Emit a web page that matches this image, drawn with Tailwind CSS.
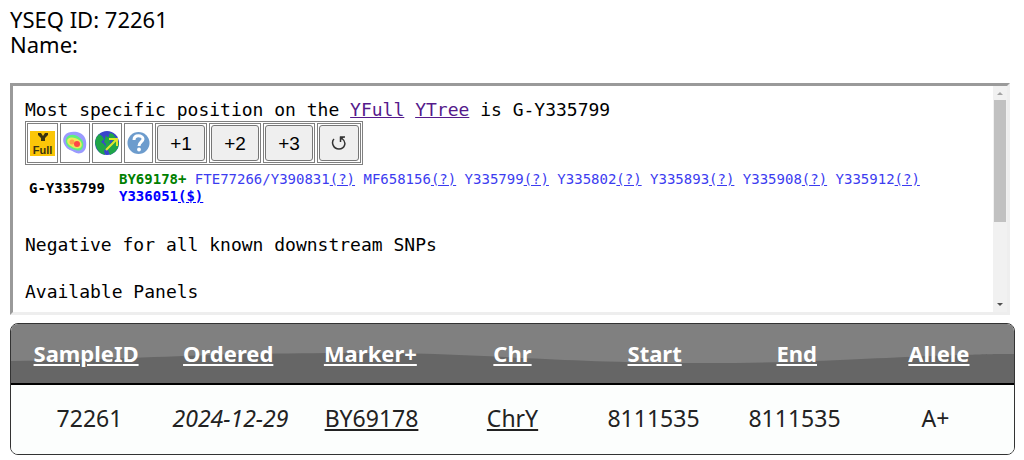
<!DOCTYPE html>
<html lang="en">
  <head>
    <meta charset="UTF-8" />
    <meta name="viewport" content="width=device-width, initial-scale=1.0" />
    <title>YSEQ Results</title>
    <script src="https://cdn.jsdelivr.net/npm/@tailwindcss/browser@4"></script>
  </head>
  <body class="bg-white text-black font-['Noto_Sans',sans-serif] pt-[7px] pl-[10px] pr-[9px]">
    <header class="text-[22px] leading-[25px]">
      <p>YSEQ ID: 72261<br />Name:</p>
    </header>

    <!-- Tree position panel -->
    <section
      class="mt-[26px] mr-[5px] h-[232px] flex border-[3px] border-t-[#9a9a9a] border-l-[#9a9a9a] border-r-[#eeeeee] border-b-[#eeeeee] font-['DejaVu_Sans_Mono',monospace] text-[18px] leading-[23px]"
    >
      <div class="flex-1 min-w-0 overflow-hidden pl-3 pt-3">
        <p>
          Most specific position on the
          <a href="#" class="text-[#551a8b] underline">YFull</a>
          <a href="#" class="text-[#551a8b] underline">YTree</a> is G-Y335799
        </p>

        <div class="inline-flex gap-[2px] p-px border border-[#808080] align-top font-['Liberation_Sans',sans-serif]">
          <a href="#" aria-label="YFull" class="flex items-center border border-[#808080] h-[40px] px-px">
            <svg class="w-[27px] h-[28px]" viewBox="0 0 27 28">
              <rect x="1" y="2" width="25" height="25" fill="#fbc608" />
              <path d="M9 4h3l2 3 2-3h3v2l-3 3v3h-4V9L9 6z" fill="#3a3310" />
              <text x="13.5" y="25" text-anchor="middle" font-size="11" font-weight="bold" fill="#3a3310">Full</text>
            </svg>
          </a>
          <a href="#" aria-label="Heat map" class="flex items-center border border-[#808080] h-[40px] px-px">
            <svg class="w-[26px] h-[28px]" viewBox="0 0 26 28">
              <path d="M3 6C6 2 14 2 18 4c5 2 7 8 6 14-1 6-7 8-12 5-3-2-6-2-8-5C1 14 0 10 3 6z" fill="#9a9aff" />
              <path d="M5 8c4-4 10-2 13 1 4 3 4 8 2 11-3 3-8 1-11-1-4-1-7-7-4-11z" fill="#5ff07a" />
              <path d="M6 10c3-3 8-1 11 1 3 2 4 6 1 8-3 1-7 0-9-2-3-1-5-5-3-7z" fill="#f0e85a" />
              <circle cx="10" cy="13" r="2.500" fill="#ffa24a" />
              <circle cx="15" cy="15" r="3" fill="#ff4646" />
            </svg>
          </a>
          <a href="#" aria-label="World map" class="flex items-center border border-[#808080] h-[40px] px-px">
            <svg class="w-[26px] h-[28px]" viewBox="0 0 26 28">
              <circle cx="13" cy="14" r="12" fill="#3a44cc" />
              <path d="M2 9l3-4 3 2 2 3-3 3 3 2 2 4-2 3 1 4-5-2-3-4-2-6z" fill="#1fa548" />
              <path d="M12 6l2 2 2-4 3 1 3 4 3 5-1 5-3 4-5 3-2-5-3-2 1-4-2-2z" fill="#1fa548" />
              <path d="M13 5l1 3M18 11l-2 3" stroke="#3a44cc" stroke-width="2" />
              <path d="M12 21L22 11M15 10h8v7" fill="none" stroke="#dfe62c" stroke-width="2" />
            </svg>
          </a>
          <a href="#" aria-label="Help" class="flex items-center border border-[#808080] h-[40px] px-px">
            <svg class="w-[25px] h-[28px]" viewBox="0 0 25 28">
              <circle cx="12.500" cy="14" r="11" fill="#6d9ccd" />
              <path d="M8 11c0-6 9-5 9-1 0 3-4 3-4 7" fill="none" stroke="#fff" stroke-width="3" />
              <circle cx="13" cy="20.500" r="1.900" fill="#fff" />
            </svg>
          </a>
          <span class="border border-[#808080] p-px"><button class="w-12 h-9 rounded-[3px] border border-[#767676] bg-[#efefef] text-[19px]">+1</button></span>
          <span class="border border-[#808080] p-px"><button class="w-12 h-9 rounded-[3px] border border-[#767676] bg-[#efefef] text-[19px]">+2</button></span>
          <span class="border border-[#808080] p-px"><button class="w-12 h-9 rounded-[3px] border border-[#767676] bg-[#efefef] text-[19px]">+3</button></span>
          <span class="border border-[#808080] p-px"><button aria-label="Reset" class="w-10 h-9 rounded-[3px] border border-[#767676] bg-[#efefef] flex items-center justify-center">
            <svg class="w-4 h-4" viewBox="0 0 16 16" fill="none" stroke="#333" stroke-width="1.500">
              <path d="M3 4C0 7 2 14 8 14c6 0 8-7 3-10.500" />
              <path d="M9 2h5M9.500 1.500V7" />
              <path d="M9 2h4L9 6z" fill="#333" stroke="none" />
            </svg>
          </button></span>
        </div>

        <div class="mt-[6px] flex items-center pl-1 text-[14px] leading-[17px] text-[#3c3cf0]">
          <b class="w-[90px] shrink-0 text-black">G-Y335799</b>
          <p>
            <b class="text-[#008000]">BY69178+</b>
            FTE77266/Y390831<a href="#" class="underline">(?)</a>
            MF658156<a href="#" class="underline">(?)</a>
            Y335799<a href="#" class="underline">(?)</a>
            Y335802<a href="#" class="underline">(?)</a>
            Y335893<a href="#" class="underline">(?)</a>
            Y335908<a href="#" class="underline">(?)</a>
            Y335912<a href="#" class="underline">(?)</a><br />
            <b class="text-[#0000ff]">Y336051<a href="#" class="underline">($)</a></b>
          </p>
        </div>

        <p class="mt-7">Negative for all known downstream SNPs</p>
        <p class="mt-6">Available Panels</p>
      </div>

      <!-- Scrollbar -->
      <div class="w-[14px] shrink-0 bg-[#f1f1f1] flex flex-col items-center py-[6px]">
        <svg class="w-[6px] h-[3px]" viewBox="0 0 6 3"><path d="M0 3L3 0l3 3z" fill="#a3a3a3" /></svg>
        <div class="mt-[5px] w-3 h-[122px] bg-[#c1c1c1]"></div>
        <svg class="mt-auto w-[6px] h-[3px]" viewBox="0 0 6 3"><path d="M0 0h6L3 3z" fill="#505050" /></svg>
      </div>
    </section>

    <!-- Results -->
    <div class="relative mt-2 border border-[#333] rounded-lg overflow-hidden text-center">
      <svg class="absolute top-0 left-0 w-full h-[60px]" viewBox="0 0 1003 60" preserveAspectRatio="none">
        <rect width="1003" height="60" fill="#808080" />
        <path d="M0 37C80 36 140 33 200 31S360 28 424 30S560 38 670 39S860 34 920 32S980 30 1003 30V60H0z" fill="#666" />
      </svg>
      <table class="relative block">
        <thead class="block h-[61px] border-b-2 border-black text-[22px] leading-[25px] text-white">
          <tr class="grid grid-cols-7 px-1 pt-[17px]">
            <th><a href="#" class="underline">SampleID</a></th>
            <th><a href="#" class="underline">Ordered</a></th>
            <th><a href="#" class="underline">Marker+</a></th>
            <th><a href="#" class="underline">Chr</a></th>
            <th><a href="#" class="underline">Start</a></th>
            <th><a href="#" class="underline">End</a></th>
            <th><a href="#" class="underline">Allele</a></th>
          </tr>
        </thead>
        <tbody class="block bg-[#fcfefd] text-[23px] leading-[25px] text-[#222]">
          <tr class="grid grid-cols-7 px-2 pt-[21px] pb-[23px]">
            <td>72261</td>
            <td class="italic">2024-12-29</td>
            <td><a href="#" class="underline">BY69178</a></td>
            <td><a href="#" class="underline">ChrY</a></td>
            <td>8111535</td>
            <td>8111535</td>
            <td>A+</td>
          </tr>
        </tbody>
      </table>
    </div>
  </body>
</html>
